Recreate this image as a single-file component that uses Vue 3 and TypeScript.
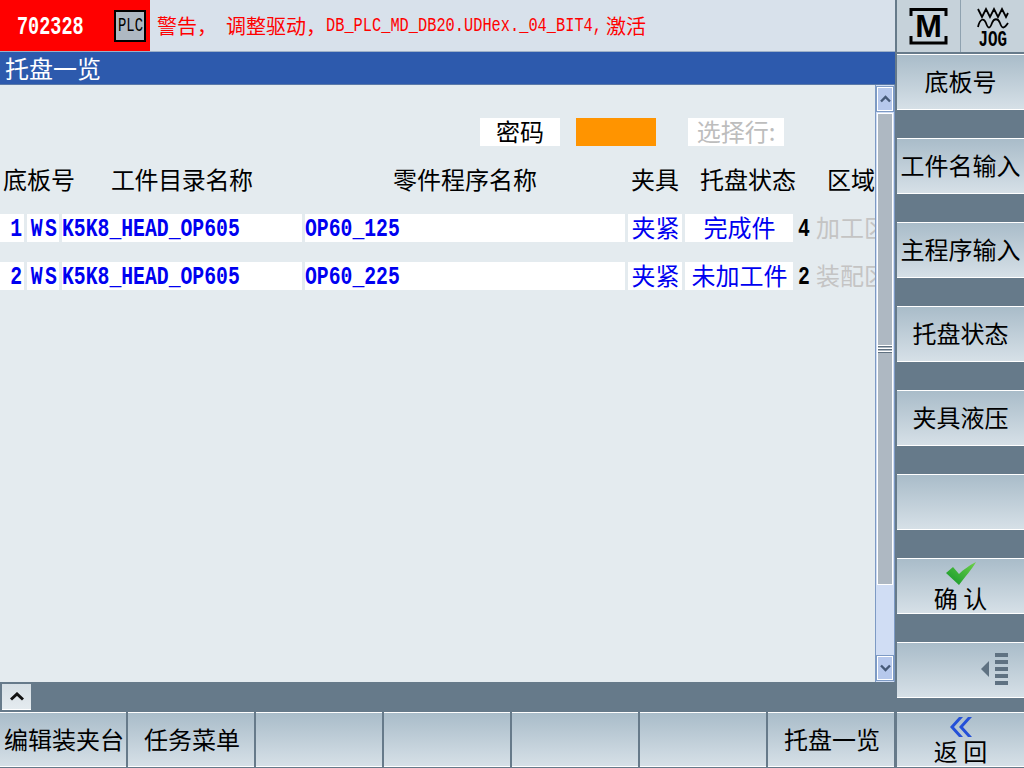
<script setup lang="ts">
interface Row {
  no: number
  ws: string
  name: string
  prog: string
  clamp: string
  status: string
  areaNo: number
  area: string
}

const rows: Row[] = [
  { no: 1, ws: 'WS', name: 'K5K8_HEAD_OP605', prog: 'OP60_125', clamp: '夹紧', status: '完成件', areaNo: 4, area: '加工区' },
  { no: 2, ws: 'WS', name: 'K5K8_HEAD_OP605', prog: 'OP60_225', clamp: '夹紧', status: '未加工件', areaNo: 2, area: '装配区' },
]

const sideKeys = ['底板号', '工件名输入', '主程序输入', '托盘状态', '夹具液压', '']
const bottomKeys = ['编辑装夹台', '任务菜单', '', '', '', '', '托盘一览']
</script>

<template>
  <div class="screen">
    <header class="alarm-bar">
      <div class="alarm-no">
        <span class="alarm-code">702328</span>
        <span class="plc"><span class="plc-text">PLC</span></span>
      </div>
      <div class="alarm-text">
        <span>警告，</span>
        <span class="alarm-msg">调整驱动，</span>
        <span class="alarm-latin">DB_PLC_MD_DB20.UDHex._04_BIT4,</span>
        <span>激活</span>
      </div>
    </header>
    <div class="mode-box">
      <button class="mode-btn">
        <svg width="40" height="40" viewBox="0 0 40 40">
          <path d="M2 10V3.500H37V10M2 30V37H37V30" fill="none" stroke="#000" stroke-width="3" />
          <text x="19.500" y="31" text-anchor="middle" class="m-letter">M</text>
        </svg>
      </button>
      <button class="mode-btn jog">
        <svg width="32" height="28" viewBox="0 0 32 28">
          <path d="M1 5L5 13L9 5L13 13L17 5L21 13L25 5L29 13L31 9" fill="none" stroke="#000" stroke-width="1.800" />
          <path d="M1 23C3 14 7 14 9 19C11 25 13 25 15 19C17 14 21 14 23 19C25 25 27 25 31 19" fill="none" stroke="#000" stroke-width="1.800" />
        </svg>
        <span class="jog-label">JOG</span>
      </button>
    </div>

    <main class="work">
      <h1 class="title">托盘一览</h1>
      <div class="content-wrap">
        <section class="content">
          <div class="pass-row">
            <span class="pass-label">密码</span>
            <span class="pass-value"></span>
            <span class="select-label">选择行:</span>
          </div>
          <div class="table-row head">
            <span class="h-no">底板号</span>
            <span class="h-name">工件目录名称</span>
            <span class="center">零件程序名称</span>
            <span class="center">夹具</span>
            <span class="h-status">托盘状态</span>
            <span class="h-area">区域</span>
          </div>
          <div v-for="row in rows" :key="row.no" class="table-row data">
            <span class="cell right"><span class="mono from-right">{{ row.no }}</span></span>
            <span class="cell center"><span class="mono from-center wide">{{ row.ws }}</span></span>
            <span class="cell"><span class="mono">{{ row.name }}</span></span>
            <span class="cell"><span class="mono">{{ row.prog }}</span></span>
            <span class="cell center cjk">{{ row.clamp }}</span>
            <span class="cell center cjk">{{ row.status }}</span>
            <span class="area">
              <b class="area-no"><span class="mono black">{{ row.areaNo }}</span></b>
              <span class="area-name">{{ row.area }}</span>
            </span>
          </div>
        </section>
        <div class="scrollbar">
          <button class="sb-btn">
            <svg width="11" height="8" viewBox="0 0 11 8"><path d="M1 6.500L5.500 2L10 6.500" fill="none" stroke="#465a78" stroke-width="2.400" /></svg>
          </button>
          <div class="sb-track">
            <div class="sb-thumb">
              <i></i><i></i><i></i>
            </div>
          </div>
          <button class="sb-btn">
            <svg width="11" height="8" viewBox="0 0 11 8"><path d="M1 1.500L5.500 6L10 1.500" fill="none" stroke="#465a78" stroke-width="2.400" /></svg>
          </button>
        </div>
      </div>
      <div class="strip">
        <button class="up-btn">
          <svg width="14" height="9" viewBox="0 0 14 9"><path d="M1 7.500L7 2L13 7.500" fill="none" stroke="#111" stroke-width="3" /></svg>
        </button>
      </div>
      <nav class="bottom-keys">
        <button v-for="(key, i) in bottomKeys" :key="i" class="key">{{ key }}</button>
      </nav>
    </main>

    <aside class="side">
      <div class="side-keys">
        <button v-for="(key, i) in sideKeys" :key="i" class="key">{{ key }}</button>
        <button class="key icon-key">
          <svg width="30" height="23" viewBox="0 0 30 23">
            <defs>
              <linearGradient id="tick" x1="1" y1="0" x2="0" y2="1">
                <stop offset="0" stop-color="#6fd24a" />
                <stop offset="1" stop-color="#0f9428" />
              </linearGradient>
            </defs>
            <path d="M0 11L7 5L13 12C17 8 24 3 30 0C26 7 19 15 13 23Z" fill="url(#tick)" />
          </svg>
          <span>确 认</span>
        </button>
        <button class="key more-key">
          <svg width="28" height="34" viewBox="0 0 28 34">
            <path d="M8 9V25L0 17Z" fill="#5f7282" />
            <path d="M14 1H27V5H14ZM14 8H27V12H14ZM14 15H27V19H14ZM14 22H27V26H14ZM14 29H27V33H14Z" fill="#5f7282" />
          </svg>
        </button>
      </div>
      <button class="key icon-key back-key">
        <svg width="22" height="20" viewBox="0 0 22 20">
          <path d="M9 0H13L4 10L13 20H9L0 10ZM18 0H22L13 10L22 20H18L9 10Z" fill="#2450d8" />
        </svg>
        <span>返 回</span>
      </button>
    </aside>
  </div>
</template>

<style>
html,
body {
  margin: 0;
  background: #667a8a;
}
</style>

<style scoped>
.screen {
  width: 1024px;
  height: 768px;
  overflow: hidden;
  display: grid;
  grid-template-columns: 895px 129px;
  grid-template-rows: 52px 716px;
  background: #667a8a;
  font-family: "Noto Sans CJK SC", "Liberation Sans", sans-serif;
  font-size: 24px;
  color: #000;
}

button {
  font: inherit;
  color: inherit;
  padding: 0;
  border: none;
}

.alarm-bar {
  display: flex;
  background: #d8e1eb;
  border-bottom: 1px solid #9db0c8;
  box-sizing: border-box;
  height: 52px;
}

.alarm-no {
  width: 150px;
  background: #f00;
  display: flex;
  align-items: center;
  flex-shrink: 0;
}

.alarm-code {
  width: 97px;
  margin-left: 17px;
  padding-top: 4px;
  color: #fff;
  font: bold 25px "Liberation Mono", monospace;
  transform: scaleX(0.74);
  transform-origin: left center;
}

.plc {
  width: 28px;
  height: 28px;
  border: 2px solid #000;
  background: #aeb8c2;
}

.plc-text {
  display: block;
  margin-left: 2px;
  font: 21px/28px "Liberation Mono", monospace;
  transform: scaleX(0.66);
  transform-origin: left center;
}

.alarm-text {
  display: flex;
  align-items: center;
  margin-left: 7px;
  color: #f00;
  font-size: 20px;
  white-space: nowrap;
}

.alarm-msg {
  margin-left: 9px;
}

.alarm-latin {
  width: 280px;
  font: 21px "Liberation Mono", monospace;
  transform: scaleX(0.73);
  transform-origin: left center;
}

.mode-box {
  display: flex;
  justify-content: space-between;
  margin-left: 2px;
  height: 52px;
  background: #8fa2b0;
}

.mode-btn {
  width: 63px;
  background: #c6d2da;
  display: flex;
  align-items: center;
  justify-content: center;
}

.jog {
  flex-direction: column;
  gap: 1px;
}

.jog-label {
  font: bold 22px/15px "Liberation Mono", monospace;
  transform: scaleX(0.72);
}

.m-letter {
  font: bold 32px "Liberation Sans", sans-serif;
}

.work {
  display: flex;
  flex-direction: column;
  min-width: 0;
}

.title {
  margin: 0;
  height: 33px;
  flex-shrink: 0;
  box-sizing: border-box;
  padding-left: 5px;
  background: #2d5aad;
  border-bottom: 1px solid #5b7aa8;
  color: #fff;
  font-size: 24px;
  font-weight: 400;
  line-height: 32px;
}

.content-wrap {
  display: flex;
  height: 597px;
  background: #e4ebef;
}

.content {
  width: 875px;
  overflow: hidden;
  padding-top: 33px;
  box-sizing: border-box;
}

.pass-row {
  display: flex;
  height: 28px;
  padding-left: 480px;
  line-height: 26px;
}

.pass-label {
  width: 80px;
  background: #fff;
  text-align: center;
}

.pass-value {
  width: 80px;
  margin-left: 16px;
  background: #ff9400;
}

.select-label {
  width: 96px;
  margin-left: 32px;
  background: #fff;
  color: #bdbdbd;
  text-align: center;
  white-space: nowrap;
}

.table-row {
  display: grid;
  grid-template-columns: 24px 32px 240px 320px 54px 108px 1fr;
  column-gap: 3px;
  white-space: nowrap;
}

.head {
  margin-top: 17px;
  height: 34px;
  line-height: 32px;
}

.h-no {
  padding-left: 3px;
  grid-column: 1 / 3;
}

.h-name {
  padding-left: 49px;
  letter-spacing: -0.400px;
}

.h-status {
  padding-left: 15px;
}

.h-area {
  padding-left: 31px;
}

.center {
  text-align: center;
}

.cjk {
  padding-left: 1px;
}

.right {
  text-align: right;
  padding-right: 2px;
  box-sizing: border-box;
}

.data {
  grid-template-rows: 28px;
  height: 28px;
  margin-top: 20px;
  line-height: 26px;
  color: #0000f0;
}

.head + .data {
  margin-top: 17px;
}

.cell {
  background: #fff;
}

.mono {
  display: inline-block;
  font: bold 25px/28px "Liberation Mono", monospace;
  transform: translateY(2px) scaleX(0.79);
  transform-origin: left center;
  vertical-align: top;
}

.from-right {
  transform-origin: right center;
}

.from-center {
  transform-origin: center;
}

.wide {
  letter-spacing: 3px;
}

.black {
  color: #000;
}

.area {
  display: flex;
  overflow: hidden;
}

.area-no {
  width: 20px;
  flex-shrink: 0;
  padding-left: 2px;
  box-sizing: border-box;
}

.area-name {
  color: #c4c4c4;
}

.scrollbar {
  width: 20px;
  display: flex;
  flex-direction: column;
  background: #d0ddf4;
  border: 1px solid #7d9ac4;
  border-width: 0 1px;
  box-sizing: border-box;
}

.sb-btn {
  height: 24px;
  flex-shrink: 0;
  margin: 2px 1px;
  box-sizing: border-box;
  background: #b6c8ec;
  border: 1px solid #fff;
  outline: 1px solid #7d9ac4;
  display: flex;
  align-items: center;
  justify-content: center;
}

.sb-track {
  flex: 1;
  padding: 0 1px;
}

.sb-thumb {
  height: 472px;
  box-sizing: border-box;
  background: #aeb8c2;
  border: 1px solid #fff;
  display: flex;
  flex-direction: column;
  align-items: center;
  justify-content: center;
  gap: 1px;
}

.sb-thumb i {
  width: 14px;
  height: 1px;
  background: #fff;
  border-bottom: 1px solid #5f7080;
}

.strip {
  height: 30px;
  flex-shrink: 0;
  display: flex;
  align-items: center;
  padding-left: 2px;
}

.up-btn {
  width: 29px;
  height: 26px;
  background: linear-gradient(#d6dfe5, #e4ebef);
  border-bottom: 1px solid #fff;
  display: flex;
  align-items: center;
  justify-content: center;
}

.bottom-keys {
  display: grid;
  grid-template-columns: repeat(7, 126px);
  column-gap: 2px;
  height: 55px;
  flex-shrink: 0;
}

.bottom-keys .key {
  padding-left: 2px;
}

.key {
  display: flex;
  align-items: center;
  justify-content: center;
  background: linear-gradient(#a9bcc9, #d6e0e7);
  border-top: 1px solid #fff;
  border-bottom: 1px solid #fff;
  box-sizing: border-box;
  white-space: nowrap;
  padding-bottom: 2px;
}

.side {
  display: flex;
  flex-direction: column;
  padding-left: 2px;
  height: 716px;
  box-sizing: border-box;
}

.side-keys {
  display: flex;
  flex-direction: column;
  gap: 28px;
  padding-top: 2px;
}

.side-keys .key {
  height: 56px;
  padding-bottom: 4px;
}

.side-keys .icon-key {
  flex-direction: column;
  justify-content: flex-start;
  padding: 3px 0 0;
  line-height: 26px;
}

.side-keys .more-key {
  justify-content: flex-end;
  padding: 0 15px 2px 0;
}

.back-key {
  flex-direction: column;
  justify-content: flex-start;
  height: 55px;
  margin-top: auto;
  margin-bottom: 1px;
  padding: 4px 0 0;
  line-height: 26px;
}

.back-key svg {
  margin-bottom: 1px;
}
</style>
